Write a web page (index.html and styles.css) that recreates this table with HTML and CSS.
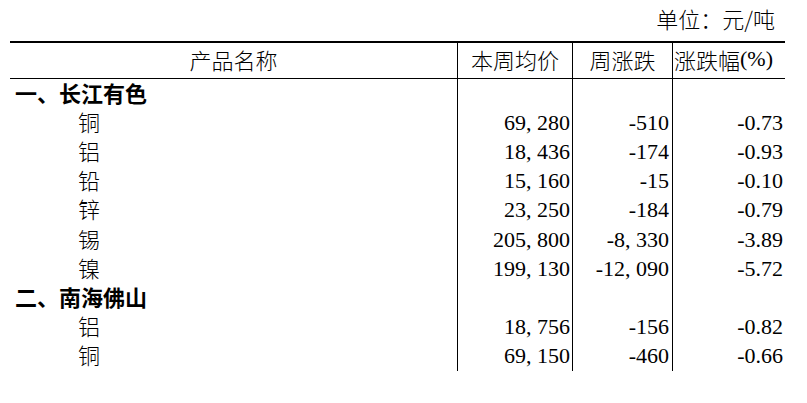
FILE: index.html
```html
<!DOCTYPE html>
<html lang="zh-CN">
<head>
<meta charset="utf-8">
<title>价格表</title>
<link rel="stylesheet" href="styles.css">
</head>
<body>
<div class="page">
  <div class="unit">单位：元/吨</div>
  <div class="table">
    <div class="th">产品名称</div>
    <div class="th sep">本周均价</div>
    <div class="th sep">周涨跌</div>
    <div class="th sep th-left">涨跌幅<span class="pct">(%)</span></div>

    <div class="cell group">一、长江有色</div>
    <div class="cell sep num"></div>
    <div class="cell sep num n3"></div>
    <div class="cell sep num"></div>

    <div class="cell item">铜</div>
    <div class="cell sep num">69<span class="cm">,</span>280</div>
    <div class="cell sep num n3">-510</div>
    <div class="cell sep num">-0.73</div>

    <div class="cell item">铝</div>
    <div class="cell sep num">18<span class="cm">,</span>436</div>
    <div class="cell sep num n3">-174</div>
    <div class="cell sep num">-0.93</div>

    <div class="cell item">铅</div>
    <div class="cell sep num">15<span class="cm">,</span>160</div>
    <div class="cell sep num n3">-15</div>
    <div class="cell sep num">-0.10</div>

    <div class="cell item">锌</div>
    <div class="cell sep num">23<span class="cm">,</span>250</div>
    <div class="cell sep num n3">-184</div>
    <div class="cell sep num">-0.79</div>

    <div class="cell item">锡</div>
    <div class="cell sep num">205<span class="cm">,</span>800</div>
    <div class="cell sep num n3">-8<span class="cm">,</span>330</div>
    <div class="cell sep num">-3.89</div>

    <div class="cell item">镍</div>
    <div class="cell sep num">199<span class="cm">,</span>130</div>
    <div class="cell sep num n3">-12<span class="cm">,</span>090</div>
    <div class="cell sep num">-5.72</div>

    <div class="cell group">二、南海佛山</div>
    <div class="cell sep num"></div>
    <div class="cell sep num n3"></div>
    <div class="cell sep num"></div>

    <div class="cell item">铝</div>
    <div class="cell sep num">18<span class="cm">,</span>756</div>
    <div class="cell sep num n3">-156</div>
    <div class="cell sep num">-0.82</div>

    <div class="cell item">铜</div>
    <div class="cell sep num">69<span class="cm">,</span>150</div>
    <div class="cell sep num n3">-460</div>
    <div class="cell sep num">-0.66</div>
  </div>
</div>
</body>
</html>
```

FILE: styles.css
```css
html, body {
  margin: 0;
  padding: 0;
  background: #ffffff;
}

body {
  font-family: "Noto Sans CJK SC", "Noto Sans", sans-serif;
  font-size: 22px;
  font-weight: 300;
  color: #000000;
}

.page {
  width: 775px;
  padding-left: 10px;
}

.unit {
  height: 41px;
  line-height: 36px;
  text-align: right;
  padding-right: 10px;
  box-sizing: border-box;
  white-space: nowrap;
}

.table {
  display: grid;
  grid-template-columns: 447px 115px 100px 113px;
  grid-template-rows: 36px;
  grid-auto-rows: 29.2px;
  border-top: 2px solid #000000;
}

.th {
  box-sizing: border-box;
  border-bottom: 1px solid #000000;
  display: flex;
  align-items: center;
  justify-content: center;
  white-space: nowrap;
  line-height: 1;
  padding-bottom: 4px;
}

.th-left {
  justify-content: flex-start;
  padding-left: 1px;
}

.pct {
  font-family: "Liberation Serif", serif;
  font-weight: 400;
}

.sep {
  border-left: 1px solid #000000;
}

.cell {
  box-sizing: border-box;
  display: flex;
  align-items: center;
  white-space: nowrap;
  line-height: 1;
}

.group {
  font-weight: 700;
  padding-left: 5px;
  padding-bottom: 4px;
}

.item {
  padding-left: 68px;
  padding-bottom: 4px;
}

.num {
  justify-content: flex-end;
  padding-right: 2px;
  font-family: "Liberation Serif", serif;
  font-weight: 400;
}

.n3 {
  padding-right: 3px;
}

.cm {
  display: inline-block;
  width: 11px;
}
```
